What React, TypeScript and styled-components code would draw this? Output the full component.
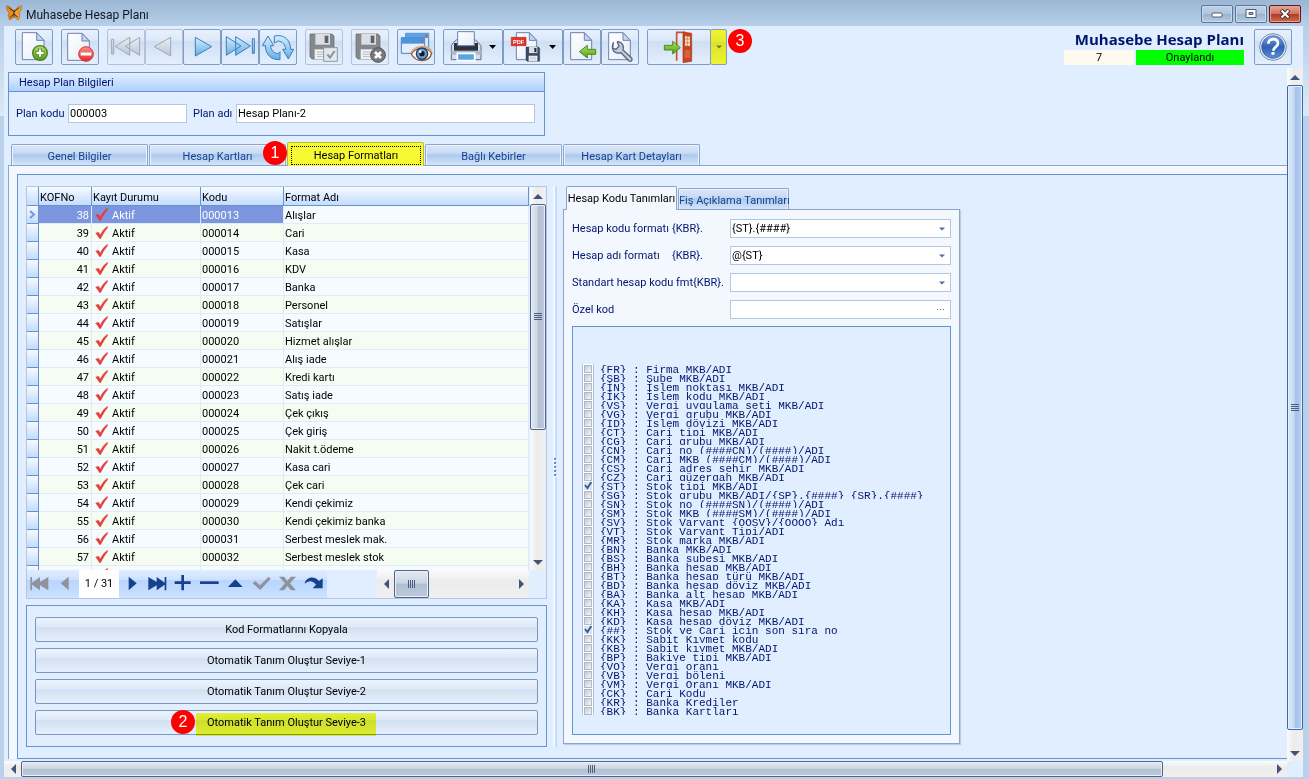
import React from 'react';
import styled, { createGlobalStyle, css } from 'styled-components';

const ui = 'Roboto, "DejaVu Sans Condensed", sans-serif';
const c = {
  face: '#e1eeff',
  page: '#f3f8ff',
  line: '#6593cf',
  tabLine: '#8ba5cd',
  soft: '#b3c7e4',
  label: '#00156e',
};

const Global = createGlobalStyle`
  *, *::before, *::after { box-sizing: border-box; }
  html, body { margin: 0; padding: 0; }
  body, button, input, select, table { font-family: ${ui}; font-size: 11px; }
  button { padding: 0; margin: 0; color: #000; cursor: default; }
`;

const Window = styled.div`
  display: flex;
  flex-direction: column;
  height: 100vh;
  min-height: 700px;
  padding: 0 6px 2px 4px;
  overflow: hidden;
  background: linear-gradient(#9bb7d4 0, #b7cfe9 26px, #dce9f6 116px, #b9d1ea 116px);
`;

const TitleBar = styled.header`
  display: flex;
  align-items: center;
  height: 26px;
  flex: none;
  padding: 0 2px;
  gap: 4px;
`;

const WindowTitle = styled.h1`
  flex: 1;
  margin: 0;
  padding-top: 3px;
  font: 12px/18px Roboto, sans-serif;
  color: #101820;
`;

const CaptionButtons = styled.div`
  display: flex;
  gap: 2px;
`;

const CaptionButton = styled.button<{ $danger?: boolean }>`
  display: grid;
  place-items: center;
  width: 32px;
  height: 18px;
  margin-top: 2px;
  border: 1px solid ${p => (p.$danger ? '#5a1a20' : '#5d7694')};
  border-radius: 2px;
  box-shadow: inset 0 0 0 1px ${p => (p.$danger ? '#e6a193' : '#c9daec')};
  background: ${p => (p.$danger
    ? 'linear-gradient(#e3a79a 0, #d0725f 48%, #b2391f 50%, #cd6a50 100%)'
    : 'linear-gradient(#bfd2e7 0, #b0c7df 48%, #98b3d0 50%, #b4cde6 100%)')};
`;

const Client = styled.div`
  display: flex;
  flex-direction: column;
  flex: 1;
  min-height: 0;
  background: ${c.face};
`;

const Toolbar = styled.div`
  display: flex;
  align-items: flex-start;
  flex: none;
  gap: 8px;
  height: 42px;
  padding: 3px 11px;
`;

const ToolGroup = styled.div`
  position: relative;
  display: flex;
`;

const ToolButton = styled.button<{ $w?: number }>`
  width: ${p => p.$w ?? 38}px;
  height: 36px;
  border: 1px solid #7f9cc4;
  border-radius: 2px;
  background: linear-gradient(#e8f1fd 0, #dce9fa 30%, #cfdff4 34%, #e3effd 100%);
  svg { display: block; }
  &:disabled { border-color: #b3c2d8; }
`;

const SplitArrow = styled(ToolButton)`
  margin-left: -1px;
  background: linear-gradient(#f0f32f 0, #e4ea2c 34%, #dbe32a 36%, #edf430 100%);
  svg { margin: 0 auto; }
`;

const Marker = styled.span<{ $x: number; $y: number }>`
  position: absolute;
  left: ${p => p.$x}px;
  top: ${p => p.$y}px;
  z-index: 3;
  width: 24px;
  height: 24px;
  border-radius: 50%;
  background: #f00;
  color: #fff;
  font: 16px/24px "Liberation Sans", sans-serif;
  text-align: center;
`;

const Summary = styled.div`
  margin-left: auto;
  margin-right: 2px;
  text-align: right;
`;

const SummaryTitle = styled.h2`
  margin: 0;
  font: bold 15px/21px "Open Sans", "Noto Sans", sans-serif;
  color: ${c.label};
`;

const SummaryRow = styled.div`
  display: flex;
  justify-content: flex-end;
  gap: 2px;
  width: 180px;
`;

const SummaryCell = styled.div<{ $ok?: boolean }>`
  flex: ${p => (p.$ok ? '108' : '70')} 1 0;
  line-height: 15px;
  text-align: center;
  color: #000;
  background: ${p => (p.$ok ? '#00ff00' : '#fffaf0')};
`;

const Scroller = styled.div`
  display: grid;
  grid-template: minmax(0, 1fr) 16px / minmax(0, 1fr) 16px;
  flex: 1;
  min-height: 0;
`;

const Form = styled.main`
  display: flex;
  flex-direction: column;
  min-height: 0;
  padding: 4px 0 2px 4px;
  overflow: hidden;
`;

const Bar = styled.div<{ $v?: boolean }>`
  display: flex;
  flex-direction: ${p => (p.$v ? 'column' : 'row')};
  ${p => (p.$v ? 'width: 16px;' : 'height: 16px;')}
  background: ${p => (p.$v
    ? 'linear-gradient(90deg, #fbfbfb, #ececec 40%, #f0f0f0)'
    : 'linear-gradient(#fbfbfb, #ececec 40%, #f0f0f0)')};
`;

const BarButton = styled.button`
  display: grid;
  place-items: center;
  flex: 0 0 17px;
  border: 0;
  background: none;
`;

const Thumb = styled.div<{ $v?: boolean; $hot?: boolean; $size: number }>`
  flex: ${p => p.$size} 1 0;
  display: grid;
  place-items: center;
  border: 1px solid ${p => (p.$hot ? '#3c69a8' : '#53658a')};
  border-radius: 2px;
  box-shadow: inset 0 0 0 1px #e9eff8;
  background: linear-gradient(${p => (p.$v ? '90deg' : '180deg')},
    ${p => (p.$hot ? '#dce8f8, #c5daf4 45%, #a3c2ea 50%, #b4cff2' : '#e4e9f0, #ccd6e2 45%, #b0bfd2 52%, #bdcadb')});
`;

const Space = styled.div<{ $size: number }>`
  flex: ${p => p.$size} 1 0;
`;

function Arrow({ dir, color = '#43537a' }: { dir: 'up' | 'down' | 'left' | 'right'; color?: string }) {
  const d = { up: 'M0 6 5 1 10 6Z', down: 'M0 1 5 6 10 1Z', left: 'M6 0 1 5 6 10Z', right: 'M1 0 6 5 1 10Z' }[dir];
  const flat = dir === 'up' || dir === 'down';
  return <svg width={flat ? 10 : 6} height={flat ? 6 : 10} viewBox={flat ? '0 0 10 6' : '0 0 6 10'}><path d={d} fill={color} /></svg>;
}

function ScrollBar({ v, hot, size, after }: { v?: boolean; hot?: boolean; size: number; after: number }) {
  return (
    <Bar $v={v}>
      <BarButton aria-label={v ? 'Yukarı' : 'Sola'}><Arrow dir={v ? 'up' : 'left'} /></BarButton>
      <Thumb $v={v} $hot={hot} $size={size}>
        <svg width="8" height="8" viewBox="0 0 8 8">
          <path d={v ? 'M0 .5h8M0 2.5h8M0 4.5h8M0 6.5h8' : 'M.5 0v8M2.5 0v8M4.5 0v8M6.5 0v8'} stroke="#4d5f80" />
        </svg>
      </Thumb>
      <Space $size={after} />
      <BarButton aria-label={v ? 'Aşağı' : 'Sağa'}><Arrow dir={v ? 'down' : 'right'} /></BarButton>
    </Bar>
  );
}

const Group = styled.section`
  flex: none;
  width: 537px;
  height: 64px;
  border: 1px solid ${c.line};
`;

const GroupTitle = styled.h3`
  margin: 0;
  height: 19px;
  padding-left: 10px;
  font: 11px/19px ${ui};
  color: ${c.label};
  border-bottom: 1px solid ${c.line};
  background: linear-gradient(#e4f0ff, #afd0fd);
`;

const GroupBody = styled.div`
  display: flex;
  align-items: center;
  height: 43px;
  padding: 0 9px 0 7px;
`;

const Label = styled.label<{ $w: number }>`
  flex: 0 0 ${p => p.$w}px;
  white-space: nowrap;
  color: ${c.label};
`;

const TextBox = styled.input`
  flex: 1;
  min-width: 0;
  height: 19px;
  padding: 0 1px;
  border: 1px solid ${c.soft};
  background: #fff;
  color: #000;
  outline: 0;
`;

const ShortBox = styled(TextBox)`
  flex: 0 0 119px;
  margin-right: 6px;
`;

const TabStrip = styled.div<{ $inner?: boolean }>`
  position: relative;
  z-index: 1;
  display: flex;
  align-items: flex-end;
  flex: none;
  gap: 1px;
  height: ${p => (p.$inner ? 24 : 25)}px;
  margin: ${p => (p.$inner ? '0' : '5px')} 0 -1px;
  padding-left: 3px;
`;

const Tab = styled.button<{ $w: number; $on?: boolean; $marked?: boolean }>`
  width: ${p => p.$w}px;
  height: 21px;
  margin-bottom: 1px;
  padding-top: 2px;
  border: 1px solid ${c.tabLine};
  border-bottom: 0;
  border-radius: 2px 2px 0 0;
  box-shadow: inset 1px 1px 0 #eaf3ff, inset -1px 0 0 #eaf3ff;
  color: #15428b;
  white-space: nowrap;
  background: linear-gradient(#dbe7f8 0, #c9dbf3 40%, #adc9f0 50%, #d4e4fa 100%);
  ${p => p.$on && css`
    height: 24px;
    margin-bottom: 0;
    padding: 0;
    box-shadow: none;
    color: #000;
    background: ${c.page};
  `}
  ${p => p.$marked && css`
    padding: 3px 2px 1px 3px;
    border-color: #b9bf2c;
    background: #f7fa32;
  `}
`;

const FocusRing = styled.span`
  display: block;
  height: 19px;
  border: 1px dotted #000;
  line-height: 18px;
`;

const TabPage = styled.div`
  display: flex;
  flex: 1;
  min-height: 0;
  padding: 8px 0 0 8px;
  border: solid ${c.tabLine};
  border-width: 1px 0 0 1px;
  background: ${c.page};
`;

const Panes = styled.div`
  display: flex;
  flex: 1;
  min-width: 0;
  min-height: 0;
  padding: 11px 8px;
  border: 1px solid ${c.line};
  border-right: 0;
  background: ${c.face};
`;

const LeftPane = styled.div`
  display: flex;
  flex-direction: column;
  flex: 0 0 521px;
  gap: 6px;
  min-height: 0;
`;

const Grid = styled.div`
  display: flex;
  flex-direction: column;
  flex: 1;
  min-height: 0;
  border: 1px solid ${c.soft};
`;

const GridBody = styled.div`
  display: flex;
  flex: 1;
  min-height: 0;
  justify-content: space-between;
`;

const GridView = styled.div`
  overflow: hidden;
  width: 502px;
`;

const Table = styled.table`
  width: 100%;
  table-layout: fixed;
  border-collapse: separate;
  border-spacing: 0;
  line-height: 15px;
  white-space: nowrap;
`;

const Head = styled.th`
  height: 19px;
  padding: 2px 1px 0;
  text-align: left;
  font-weight: normal;
  border: solid ${c.line};
  border-width: 0 1px 1px 0;
  background: linear-gradient(#f8fbff, #dceaff 50%, #c4dcff);
`;

const Row = styled.tr`
  &:nth-child(odd) { background: #f5fbff; }
  &:nth-child(even) { background: #f5fcf2; }
`;

const Cell = styled.td<{ $sel?: boolean; $num?: boolean }>`
  height: 18px;
  padding: 2px 2px 0 1px;
  border: solid #dfebfb;
  border-width: 0 1px 1px 0;
  text-align: ${p => (p.$num ? 'right' : 'left')};
  ${p => p.$sel && css`background: #7b96df; color: #fff;`}
  svg { vertical-align: top; margin: 0 4px 0 2px; }
`;

const Indicator = styled.td`
  padding: 0;
  border: solid ${c.line};
  border-width: 0 1px 1px 0;
  background: linear-gradient(#f6faff, #c4dbfb);
  svg { display: block; margin: 0 auto; }
`;

const Navigator = styled.div`
  display: flex;
  justify-content: space-between;
  flex: none;
  height: 28px;
  padding-right: 17px;
`;

const NavButtons = styled.div`
  display: flex;
  background: linear-gradient(#e0edff, #cde1ff 35%, #b7d5fe 37%, #cce2ff);
`;

const NavButton = styled.button`
  width: 26px;
  height: 28px;
  border: 0;
  background: none;
  color: #15428b;
  svg { display: block; }
  &:disabled { color: #8f949b; }
`;

const Position = styled.span`
  width: 40px;
  line-height: 28px;
  text-align: center;
  background: #fff;
`;

const NavScroll = styled.div`
  width: 152px;
  display: grid;
  > div { height: 28px; }
`;

const Actions = styled.div`
  display: flex;
  flex-direction: column;
  flex: none;
  gap: 6px;
  padding: 11px 8px;
  border: 1px solid ${c.line};
`;

const ActionButton = styled.button`
  position: relative;
  height: 25px;
  border: 1px solid #7b96bf;
  border-radius: 2px;
  background: linear-gradient(#edf4fe 0, #dfe9f7 38%, #d3e0f1 42%, #e5f0fd 100%);
`;

const Highlight = styled.span`
  position: absolute;
  left: 160px;
  top: 2px;
  width: 180px;
  height: 23px;
  background: #f7fc30;
  mix-blend-mode: multiply;
`;

const Splitter = styled.div`
  display: grid;
  place-items: center;
  flex: none;
  width: 4px;
  margin: 0 6px;
  background: linear-gradient(90deg, #f2f8ff 0, #f2f8ff 50%, #c4ddff 50%);
`;

const RightPane = styled.div`
  flex: 0 0 397px;
  min-width: 0;
`;

const Sheet = styled.div`
  padding: 9px 8px 8px;
  border: 1px solid ${c.tabLine};
  box-shadow: 1px 1px 1px #b9cde8;
  background: ${c.page};
`;

const Field = styled.div`
  display: flex;
  align-items: center;
  height: 19px;
  margin-bottom: 8px;
`;

const Caption = styled.span`
  display: inline-block;
  min-width: 100px;
`;

const Box = styled.div`
  position: relative;
  display: flex;
  flex: 1;
  height: 19px;
  border: 1px solid ${c.soft};
  background: #fff;
  > svg { position: absolute; right: 5px; top: 7px; pointer-events: none; }
`;

const Combo = styled.select`
  flex: 1;
  padding: 0 1px;
  border: 0;
  outline: 0;
  appearance: none;
  background: none;
  color: #000;
`;

const PlainInput = styled.input`
  flex: 1;
  min-width: 0;
  border: 0;
  outline: 0;
  background: none;
`;

const Ellipsis = styled.button`
  width: 18px;
  border: 0;
  background: none;
  svg { display: block; margin: 0 auto; }
`;

const CodeList = styled.fieldset`
  min-width: 0;
  margin: -1px 0 0;
  padding: 37px 0 19px 9px;
  border: 1px solid ${c.line};
  background: ${c.face};
`;

const CodeRow = styled.label`
  display: flex;
  height: 9px;
  overflow: hidden;
  gap: 6px;
  font: 11px/12px "Liberation Mono", monospace;
  white-space: pre;
  color: ${c.label};
`;

const Tick = styled.input`
  appearance: none;
  flex: none;
  width: 12px;
  height: 9px;
  margin: 0;
  border: solid #a9c0df;
  border-width: 0 1px;
  background:
    linear-gradient(135deg, #c5cbd3, #f6f7f8) center / 6px 6px no-repeat,
    linear-gradient(#b0bac6, #b0bac6) center / 8px 8px no-repeat,
    #fff;
  &:checked {
    background: url("data:image/svg+xml,%3Csvg xmlns='http://www.w3.org/2000/svg' width='10' height='9'%3E%3Cpath d='M2 4l2.4 3L8.4 1' fill='none' stroke='%233b5f97' stroke-width='2'/%3E%3C/svg%3E"),
      linear-gradient(#dde3ea, #dde3ea) center / 8px 8px no-repeat, #fff;
  }
`;

const Doc = ({ x, y, w = 65, h = 81 }: { x: number; y: number; w?: number; h?: number }) => (
  <g stroke="#6d82b0" strokeWidth="3" strokeLinejoin="round">
    <path d={`M${x} ${y}h${w - 22}l22 23v${h - 23}h-${w}Z`} fill="url(#paper)" />
    <path d={`M${x + w - 22} ${y}v23h22Z`} fill="#c8d6ee" />
  </g>
);

const Floppy = ({ x, y, s = 1, fill = '#85898f', shade = '#5f6368' }: { x: number; y: number; s?: number; fill?: string; shade?: string }) => (
  <g transform={`translate(${x} ${y}) scale(${s})`}>
    <path d="M0 0h66l6 6v69H6l-6-6Z" fill={fill} stroke={shade} strokeWidth="2" />
    <path d="M16 0h44v32H16Z" fill="#dcdfe3" />
    <path d="M44 5h11v22H44Z" fill={shade} />
    <path d="M14 46h46v29H14Z" fill="#f1f2f4" />
    <path d="M20 54h34M20 61h34M20 68h34" stroke="#b9bdc2" strokeWidth="3" />
  </g>
);

function Glyph({ box, children }: { box: string; children: React.ReactNode }) {
  const [x, y, w, h] = box.split(' ').map(Number);
  return <svg width={w / 3} height={h / 3} viewBox={`${x} ${y} ${w} ${h}`}>{children}</svg>;
}

const HiddenSvg = styled.svg`
  position: absolute;
`;

const Defs = () => (
  <HiddenSvg width="0" height="0" aria-hidden="true">
    <defs>
      <linearGradient id="paper" x1="0" y1="0" x2="1" y2="1"><stop stopColor="#fff" /><stop offset="1" stopColor="#e6edf9" /></linearGradient>
      <linearGradient id="sky" x1="0" y1="0" x2="0" y2="1"><stop stopColor="#d5effd" /><stop offset="1" stopColor="#63aee6" /></linearGradient>
      <linearGradient id="mist" x1="0" y1="0" x2="0" y2="1"><stop stopColor="#eceff4" /><stop offset="1" stopColor="#bcc5d2" /></linearGradient>
      <linearGradient id="leaf" x1="0" y1="0" x2="0" y2="1"><stop stopColor="#b4e35d" /><stop offset="1" stopColor="#4f9e1b" /></linearGradient>
      <linearGradient id="ruby" x1="0" y1="0" x2="0" y2="1"><stop stopColor="#ff8d84" /><stop offset="1" stopColor="#e32a30" /></linearGradient>
      <linearGradient id="orb" x1="0" y1="0" x2="0" y2="1"><stop stopColor="#7fa6e2" /><stop offset=".5" stopColor="#2f5fb5" /><stop offset="1" stopColor="#5a90dc" /></linearGradient>
    </defs>
  </HiddenSvg>
);

const Butterfly = () => (
  <svg width="16" height="16" viewBox="0 0 48 48">
    <path d="M23 22C18 8 8 1 1 3c1 11 3 17 9 20-4 3-4 9-2 15 1 7 4 8 10 3 3-4 4-9 5-14Z" fill="#ef8a17" stroke="#5c2b05" strokeWidth="1" />
    <path d="M25 22C30 8 40 1 47 3c-1 11-3 17-9 20 4 3 4 9 2 15-1 7-4 8-10 3-3-4-4-9-5-14Z" fill="#f5a02b" stroke="#5c2b05" strokeWidth="1" />
    <path d="M24 14v24M24 20L8 8M24 20L40 8M24 27l-12 10M24 27l12 10" stroke="#5c2b05" strokeWidth="3" />
  </svg>
);

const DropMark = ({ color = '#000', w = 8 }: { color?: string; w?: number }) => (
  <svg width={w} height="4" viewBox="0 0 8 4"><path d="M0 0h8L4 4Z" fill={color} /></svg>
);

const Check = () => (
  <svg width="13" height="13" viewBox="0 0 39 39">
    <path d="M2 21l9-2 5 8C21 16 28 8 37 1l1 4C29 15 23 25 17 38h-3Z" fill="#e8413c" stroke="#d63a36" />
  </svg>
);

const MainToolbar = () => (
  <Toolbar>
    <ToolButton aria-label="Yeni"><Glyph box="48 90 108 102"><Doc x={67} y={98} />
      <circle cx="120" cy="159" r="22" fill="url(#leaf)" stroke="#4d7e1c" strokeWidth="4" />
      <path d="M120 146v26M107 159h26" stroke="#3f6f16" strokeWidth="12" /><path d="M120 148v22M109 159h22" stroke="#fff" strokeWidth="7" /></Glyph></ToolButton>
    <ToolButton aria-label="Sil"><Glyph box="186 90 108 102"><Doc x={203} y={100} />
      <circle cx="258" cy="162" r="22" fill="url(#ruby)" stroke="#d2383c" strokeWidth="3" />
      <path d="M242 162h32" stroke="#fff" strokeWidth="9" /></Glyph></ToolButton>
    <ToolGroup>
      <ToolButton disabled aria-label="İlk"><Glyph box="324 90 108 102"><g fill="url(#mist)" stroke="#9ba6b6" strokeWidth="3">
        <path d="M335 118h6v44h-6ZM346 139l43-27v54ZM376 139l43-27v54Z" /></g></Glyph></ToolButton>
      <ToolButton disabled aria-label="Önceki"><Glyph box="438 90 108 102"><path d="M463 140l49-28v56Z" fill="url(#mist)" stroke="#9ba6b6" strokeWidth="3" /></Glyph></ToolButton>
      <ToolButton aria-label="Sonraki"><Glyph box="552 90 108 102"><path d="M586 112l49 28-49 28Z" fill="url(#sky)" stroke="#3f7dbb" strokeWidth="3" /></Glyph></ToolButton>
      <ToolButton aria-label="Son"><Glyph box="666 90 108 102"><g fill="url(#sky)" stroke="#3f7dbb" strokeWidth="3">
        <path d="M679 110l44 28-44 28ZM707 110l44 28-44 28ZM757 116h6v44h-6Z" /></g></Glyph></ToolButton>
      <ToolButton aria-label="Yenile"><Glyph box="780 90 108 102"><g fill="url(#sky)" stroke="#3f7dbb" strokeWidth="3" strokeLinejoin="round">
        <path d="M787 137l17-29 17 29h-9c1 14 9 22 22 24l6-6v24c-24 1-43-12-44-42Z" />
        <path d="M881 148l-16 29-17-29h9c-1-15-9-23-22-25l-12 6v-21c28-6 48 10 49 40Z" /></g></Glyph></ToolButton>
    </ToolGroup>
    <ToolButton disabled aria-label="Kaydet"><Glyph box="18 90 108 102"><Floppy x={30} y={102} />
      <path d="M71 143h41v41H71Z" fill="#e3e8ef" stroke="#8d96a3" strokeWidth="3" /><path d="M82 163l8 10 14-20" fill="none" stroke="#8a929d" strokeWidth="6" /></Glyph></ToolButton>
    <ToolButton disabled aria-label="Vazgeç"><Glyph box="156 90 108 102"><Floppy x={168} y={102} />
      <circle cx="234" cy="165" r="22" fill="#77797d" stroke="#505357" strokeWidth="3" /><path d="M225 156l18 18M243 156l-18 18" stroke="#fff" strokeWidth="8" /></Glyph></ToolButton>
    <ToolButton aria-label="Önizleme"><Glyph box="294 90 108 102">
      <path d="M317 100h69v55h-69Z" fill="#dcebfa" stroke="#4385c7" strokeWidth="3" /><path d="M317 100h69v14h-69Z" fill="#5ea3e3" />
      <path d="M304 113h70v47h-70Z" fill="#e3f0fc" stroke="#4385c7" strokeWidth="3" /><path d="M304 113h70v18h-70Z" fill="#4c95dc" />
      <path d="M376 104h6v6h-6ZM364 118h6v6h-6Z" fill="#f04c32" />
      <path d="M334 162c12-20 46-24 61-3-6 28-46 31-61 3Z" fill="#fff" stroke="#8b5a3a" strokeWidth="4" />
      <path d="M334 156c14-20 46-22 60-3" fill="none" stroke="#dba884" strokeWidth="6" />
      <circle cx="366" cy="161" r="17" fill="#6b9ccb" stroke="#1d3d66" strokeWidth="4" /><circle cx="366" cy="161" r="8" fill="#101a28" /><circle cx="361" cy="155" r="4" fill="#fff" />
    </Glyph></ToolButton>
    <ToolGroup>
      <ToolButton $w={60} aria-label="Yazdır"><Glyph box="432 90 174 102">
        <path d="M461 127l9-8h55l9 8 9 10v42h-89v-42Z" fill="#d8dee9" stroke="#5d6c88" strokeWidth="3" />
        <path d="M462 129h72v23c-20 7-52 7-72 0Z" fill="#2d333d" />
        <path d="M473 95h50v42h-50Z" fill="url(#paper)" stroke="#6d82b0" strokeWidth="3" />
        <path d="M454 152h89v12h-89Z" fill="#aeb9cb" />
        <path d="M472 160h52v22h-52Z" fill="#59a5e2" stroke="#fff" strokeWidth="5" />
        <path d="M567 135h21l-10 12Z" fill="#000" /></Glyph></ToolButton>
      <ToolButton $w={60} aria-label="PDF olarak kaydet"><Glyph box="612 90 174 102"><Doc x={649} y={98} w={61} />
        <path d="M634 112h44v25h-44Z" fill="#e2352b" stroke="#b8211a" strokeWidth="2" />
        <text x="656" y="131" textAnchor="middle" fontSize="17" fontWeight="700" fontFamily="Liberation Sans, sans-serif" fill="#fff">PDF</text>
        <Floppy x={678} y={141} s={0.57} fill="#3c4a66" shade="#1e2638" /><path d="M747 135h21l-10 12Z" fill="#000" /></Glyph></ToolButton>
      <ToolButton aria-label="İçe aktar"><Glyph box="792 90 108 102"><Doc x={812} y={98} w={63} />
        <path d="M838 155l24-19v12h25v15h-25v11Z" fill="url(#leaf)" stroke="#4d8a1e" strokeWidth="3" /></Glyph></ToolButton>
      <ToolButton aria-label="Ayarlar"><Glyph box="906 90 108 102"><Doc x={926} y={98} />
        <path d="M940 128c-6 13-3 26 8 30 6 2 11 2 15 0l24 25c6 3 12-3 8-9l-26-24c4-11-1-22-14-25l-3 1 5 13-9 9-10-4Z" fill="#c3ccd9" stroke="#56657c" strokeWidth="4" strokeLinejoin="round" /></Glyph></ToolButton>
    </ToolGroup>
    <ToolGroup>
      <ToolButton $w={64} aria-label="Çıkış"><Glyph box="1044 90 186 102">
        <path d="M1130 182V97h26" fill="none" stroke="#d0502b" strokeWidth="5" />
        <path d="M1149 96l26 4v84l-26 4Z" fill="#c9431f" stroke="#a43616" strokeWidth="2" />
        <path d="M1155 108l15 2v28l-15-1Z" fill="#f6dfc4" /><path d="M1162 108v30M1155 117h15M1155 128h15" stroke="#b9744c" strokeWidth="2" />
        <path d="M1154 150h16v24h-16Z" fill="#d8603a" />
        <path d="M1093 136h25v-12l23 19-23 19v-12h-25Z" fill="url(#leaf)" stroke="#4d8a1e" strokeWidth="3" /></Glyph></ToolButton>
      <SplitArrow $w={17} aria-label="Çıkış seçenekleri"><DropMark color="#6f7a2a" w={6} /></SplitArrow>
      <Marker $x={81} $y={0}>3</Marker>
    </ToolGroup>
    <Summary>
      <SummaryTitle>Muhasebe Hesap Planı</SummaryTitle>
      <SummaryRow><SummaryCell>7</SummaryCell><SummaryCell $ok>Onaylandı</SummaryCell></SummaryRow>
    </Summary>
    <ToolButton aria-label="Yardım"><Glyph box="765 90 108 102">
      <circle cx="819" cy="141" r="40" fill="#e9eef7" stroke="#7288b0" strokeWidth="3" />
      <circle cx="819" cy="141" r="34" fill="url(#orb)" stroke="#2b4f94" strokeWidth="2" />
      <path d="M805 131c0-18 29-18 29-1 0 11-14 10-14 22" fill="none" stroke="#fff" strokeWidth="8" /><circle cx="819" cy="160" r="5" fill="#fff" />
    </Glyph></ToolButton>
  </Toolbar>
);

const formats = [
  'Alışlar', 'Cari', 'Kasa', 'KDV', 'Banka', 'Personel', 'Satışlar', 'Hizmet alışlar', 'Alış iade', 'Kredi kartı', 'Satış iade',
  'Çek çıkış', 'Çek giriş', 'Nakit t.ödeme', 'Kasa cari', 'Çek cari', 'Kendi çekimiz', 'Kendi çekimiz banka',
  'Serbest meslek mak.', 'Serbest meslek stok', 'Serbest meslek',
];

const codes = `FR|Firma MKB/ADI
ŞB|Şube MKB/ADI
İN|İşlem noktası MKB/ADI
İK|İşlem kodu MKB/ADI
VS|Vergi uygulama seti MKB/ADI
VG|Vergi grubu MKB/ADI
ID|İşlem dövizi MKB/ADI
CT|Cari tipi MKB/ADI
CG|Cari grubu MKB/ADI
CN|Cari no (####CN)/(####)/ADI
CM|Cari MKB (####CM)/(####)/ADI
CS|Cari adres şehir MKB/ADI
CZ|Cari güzergah MKB/ADI
ST|Stok tipi MKB/ADI
SG|Stok grubu MKB/ADI/{SP}.{####} {SR}.{####}
SN|Stok no (####SN)/(####)/ADI
SM|Stok MKB (####SM)/(####)/ADI
SV|Stok Varyant {OOSV}/{OOOO} Adı
VT|Stok Varyant Tipi/ADI
MR|Stok marka MKB/ADI
BN|Banka MKB/ADI
BS|Banka şubesi MKB/ADI
BH|Banka hesap MKB/ADI
BT|Banka hesap türü MKB/ADI
BD|Banka hesap döviz MKB/ADI
BA|Banka alt hesap MKB/ADI
KA|Kasa MKB/ADI
KH|Kasa hesap MKB/ADI
KD|Kasa hesap döviz MKB/ADI
##|Stok ve Cari için son sıra no
KK|Sabit Kıymet kodu
KB|Sabit kıymet MKB/ADI
BP|Bakiye tipi MKB/ADI
VO|Vergi oranı
VB|Vergi böleni
VM|Vergi Oranı MKB/ADI
CK|Cari Kodu
KR|Banka Krediler
BK|Banka Kartları`.split('\n').map(l => l.split('|'));

const nav: { name: string; x: number; off?: boolean; art: React.ReactNode }[] = [
  { name: 'İlk kayıt', x: 81, off: true, art: <path d="M91 171h5v17l24-17v15l25-15v40l-25-15v15L96 194v17h-5Z" /> },
  { name: 'Önceki kayıt', x: 159, off: true, art: <path d="M182 190l24-20v41Z" /> },
  { name: 'Sonraki kayıt', x: 357, art: <path d="M386 170l24 20-24 21Z" /> },
  { name: 'Son kayıt', x: 435, art: <path d="M499 171h-5v17l-24-17v15l-25-15v40l25-15v15l24-17v17h5Z" /> },
  { name: 'Ekle', x: 513, art: <path d="M544 165h8v19h20v8h-20v19h-8v-19h-20v-8h20Z" /> },
  { name: 'Çıkar', x: 591, art: <path d="M600 184h56v8h-56Z" /> },
  { name: 'Düzenle', x: 669, art: <path d="M684 201l22-23 22 23Z" /> },
  { name: 'Onayla', x: 747, off: true, art: <path d="M758 190l8-7 14 13 26-26 6 6-31 34Z" /> },
  { name: 'İptal', x: 825, off: true, art: <path d="M837 170h15l10 12 11-12h15l-18 20 18 21h-15l-11-13-10 13h-15l18-21Z" /> },
  { name: 'Tazele', x: 903, art: <path d="M914 191c3-19 28-26 43-8l11-8v30h-30l10-11c-9-13-22-14-34-3Z" /> },
];

const NavItem = ({ item }: { item: (typeof nav)[number] }) => (
  <NavButton disabled={item.off} aria-label={item.name}>
    <svg width="26" height="28" viewBox={`${item.x} 150 78 84`} fill="currentColor">{item.art}</svg>
  </NavButton>
);

const RecordGrid = () => (
  <Grid>
    <GridBody>
      <GridView>
        <Table>
          <colgroup><col width="12" /><col width="53" /><col width="109" /><col width="83" /><col /></colgroup>
          <thead><tr><Head aria-label="Seçim" /><Head>KOFNo</Head><Head>Kayıt Durumu</Head><Head>Kodu</Head><Head>Format Adı</Head></tr></thead>
          <tbody>
            {formats.map((name, i) => (
              <Row key={name}>
                <Indicator>{i === 0 && <svg width="7" height="9" viewBox="0 0 7 9"><path d="M1 1l4 3.500-4 3.500" fill="none" stroke="#6a9be0" strokeWidth="2" /></svg>}</Indicator>
                <Cell $num $sel={i === 0}>{38 + i}</Cell>
                <Cell $sel={i === 0}><Check />Aktif</Cell>
                <Cell $sel={i === 0}>{String(13 + i).padStart(6, '0')}</Cell>
                <Cell>{name}</Cell>
              </Row>
            ))}
          </tbody>
        </Table>
      </GridView>
      <ScrollBar v size={226} after={124} />
    </GridBody>
    <Navigator>
      <NavButtons>
        {nav.slice(0, 2).map(n => <NavItem key={n.name} item={n} />)}
        <Position>1 / 31</Position>
        {nav.slice(2).map(n => <NavItem key={n.name} item={n} />)}
      </NavButtons>
      <NavScroll><ScrollBar size={34} after={84} /></NavScroll>
    </Navigator>
  </Grid>
);

const combos = [
  { id: 'kodFormat', text: 'Hesap kodu formatı', value: '{ST}.{####}' },
  { id: 'adFormat', text: 'Hesap adı formatı', value: '@{ST}' },
  { id: 'stdFormat', text: 'Standart hesap kodu fmt', value: '' },
];

const Definitions = () => (
  <RightPane>
    <TabStrip $inner role="tablist">
      <Tab role="tab" aria-selected $on $w={111}>Hesap Kodu Tanımları</Tab>
      <Tab role="tab" aria-selected={false} $w={111}>Fiş Açıklama Tanımları</Tab>
    </TabStrip>
    <Sheet>
      {combos.map(f => (
        <Field key={f.id}>
          <Label $w={158} htmlFor={f.id}><Caption>{f.text}</Caption>{'{KBR}.'}</Label>
          <Box><Combo id={f.id} defaultValue={f.value}><option>{f.value}</option></Combo><DropMark color="#4c6c9f" w={6} /></Box>
        </Field>
      ))}
      <Field>
        <Label $w={158} htmlFor="ozelKod">Özel kod</Label>
        <Box>
          <PlainInput id="ozelKod" />
          <Ellipsis aria-label="Seç"><svg width="8" height="1" viewBox="0 0 8 1"><path d="M0 0h1v1H0ZM3 0h1v1H3ZM6 0h1v1H6Z" fill="#4c6c9f" /></svg></Ellipsis>
        </Box>
      </Field>
      <CodeList>
        {codes.map(([code, text]) => (
          <CodeRow key={code}><Tick type="checkbox" defaultChecked={code === 'ST' || code === '##'} />{`{${code}} : ${text}`}</CodeRow>
        ))}
      </CodeList>
    </Sheet>
  </RightPane>
);

export default function App() {
  return (
    <Window>
      <Global />
      <Defs />
      <TitleBar>
        <Butterfly />
        <WindowTitle>Muhasebe Hesap Planı</WindowTitle>
        <CaptionButtons>
          <CaptionButton aria-label="Simge durumuna küçült"><svg width="12" height="10"><rect x="1" y="4" width="10" height="4" rx="1" fill="#fff" stroke="#54616f" /></svg></CaptionButton>
          <CaptionButton aria-label="Ekranı kapla"><svg width="12" height="10"><path d="M1 .5h10v8H1Z" fill="#fff" stroke="#54616f" /><path d="M4 3.500h4v2H4Z" fill="#9fb9d5" stroke="#54616f" /></svg></CaptionButton>
          <CaptionButton $danger aria-label="Kapat"><svg width="12" height="10"><path d="M2 1l8 8M10 1L2 9" stroke="#4d3036" strokeWidth="4" /><path d="M2.500 1.500l7 7M9.500 1.500l-7 7" stroke="#fff" strokeWidth="2" /></svg></CaptionButton>
        </CaptionButtons>
      </TitleBar>
      <Client>
        <MainToolbar />
        <Scroller>
          <Form>
            <Group>
              <GroupTitle>Hesap Plan Bilgileri</GroupTitle>
              <GroupBody>
                <Label $w={52} htmlFor="planKodu">Plan kodu</Label>
                <ShortBox id="planKodu" defaultValue="000003" />
                <Label $w={43} htmlFor="planAdi">Plan adı</Label>
                <TextBox id="planAdi" defaultValue="Hesap Planı-2" />
              </GroupBody>
            </Group>
            <TabStrip role="tablist">
              <Tab role="tab" $w={137}>Genel Bilgiler</Tab>
              <Tab role="tab" $w={137}>Hesap Kartları</Tab>
              <Tab role="tab" aria-selected $on $marked $w={137}><FocusRing>Hesap Formatları</FocusRing></Tab>
              <Tab role="tab" $w={137}>Bağlı Kebirler</Tab>
              <Tab role="tab" $w={137}>Hesap Kart Detayları</Tab>
              <Marker $x={255} $y={0}>1</Marker>
            </TabStrip>
            <TabPage>
              <Panes>
                <LeftPane>
                  <RecordGrid />
                  <Actions>
                    <ActionButton>Kod Formatlarını Kopyala</ActionButton>
                    <ActionButton>Otomatik Tanım Oluştur Seviye-1</ActionButton>
                    <ActionButton>Otomatik Tanım Oluştur Seviye-2</ActionButton>
                    <ActionButton>Otomatik Tanım Oluştur Seviye-3<Highlight /><Marker $x={135} $y={-1}>2</Marker></ActionButton>
                  </Actions>
                </LeftPane>
                <Splitter>
                  <svg width="4" height="20" viewBox="0 0 4 20">
                    <path d="M2.500 2v18" stroke="#fff" strokeWidth="2" strokeDasharray="2 2" />
                    <path d="M2 1v18" stroke="#5b8fd6" strokeWidth="2" strokeDasharray="2 2" />
                  </svg>
                </Splitter>
                <Definitions />
              </Panes>
            </TabPage>
          </Form>
          <ScrollBar v hot size={646} after={14} />
          <ScrollBar size={1142} after={107} />
        </Scroller>
      </Client>
    </Window>
  );
}
